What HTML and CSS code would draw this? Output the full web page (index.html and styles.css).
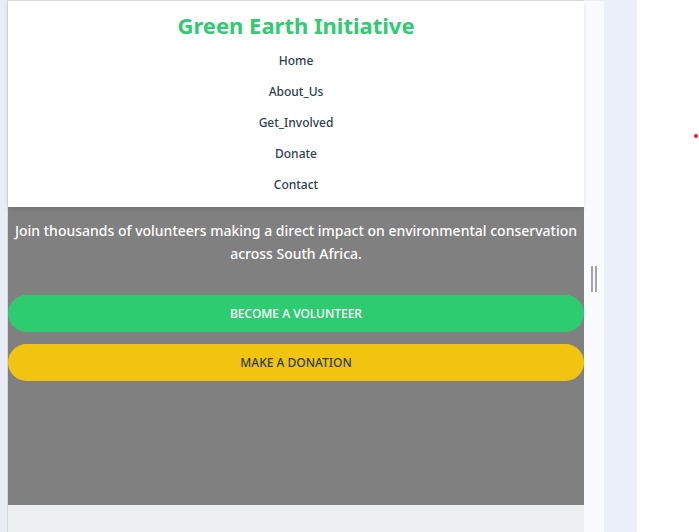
FILE: index.html
```html
<!DOCTYPE html>
<html lang="en">
<head>
<meta charset="utf-8">
<title>Green Earth Initiative</title>
<link rel="stylesheet" href="styles.css">
</head>
<body>
<div class="workspace">
  <div class="device">
    <header class="header">
      <h1 class="logo">Green Earth Initiative</h1>
      <nav>
        <ul class="menu">
          <li><a href="#home">Home</a></li>
          <li><a href="#about">About_Us</a></li>
          <li><a href="#involved">Get_Involved</a></li>
          <li><a href="#donate">Donate</a></li>
          <li><a href="#contact">Contact</a></li>
        </ul>
      </nav>
    </header>
    <main class="hero">
      <p class="lead">Join thousands of volunteers making a direct impact on environmental conservation across South Africa.</p>
      <div class="actions">
        <a class="btn btn-primary" href="#involved">BECOME A VOLUNTEER</a>
        <a class="btn btn-secondary" href="#donate">MAKE A DONATION</a>
      </div>
    </main>
  </div>
  <div class="resizer"><span class="grip"></span></div>
  <div class="gutter"></div>
  <aside class="panel"><span class="marker"></span></aside>
</div>
</body>
</html>
```
FILE: styles.css
```css
* {
  box-sizing: border-box;
}

body {
  margin: 0;
  font-family: "Noto Sans", "Open Sans", sans-serif;
  font-size: 12px;
  color: #2c3e50;
  background: #fff;
}

.workspace {
  display: grid;
  grid-template-columns: minmax(0, 1fr) 20px 33px 62px;
  min-height: 100vh;
  padding-left: 7px;
  background: #e8edf6;
}

.device {
  border-top: 1px solid #dddde4;
  border-left: 1px solid #d9dce4;
  background: #ecf0f1;
}

.header {
  position: relative;
  padding: 8px 0;
  text-align: center;
  background: #fff;
  box-shadow: 0 2px 5px rgba(0, 0, 0, 0.1);
}

.logo {
  margin: 0;
  font-size: 22px;
  line-height: 33px;
  font-weight: 700;
  color: #2ecc71;
}

.menu {
  display: grid;
  gap: 12px;
  margin: 0;
  padding: 9px 0 5px;
  list-style: none;
  line-height: 19px;
}

.menu a {
  font-weight: 500;
  color: #2c3e50;
  text-decoration: none;
}

.hero {
  min-height: 298px;
  padding-top: 12px;
  text-align: center;
  color: #fff;
  background: #808080;
}

.lead {
  margin: 0 0 30px;
  font-size: 14px;
  line-height: 23px;
  font-weight: 500;
}

.actions {
  display: grid;
  gap: 12px;
}

.btn {
  padding: 9px 24px;
  border-radius: 19px;
  line-height: 19px;
  font-weight: 500;
  text-decoration: none;
}

.btn-primary {
  color: #fff;
  background: #2ecc71;
}

.btn-secondary {
  color: #2c3e50;
  background: #f1c40f;
}

.resizer {
  display: flex;
  justify-content: center;
  padding-top: 265px;
  border-top: 1px solid #ebeff8;
  background: #f9fbff;
}

.grip {
  width: 6px;
  height: 26px;
  border: solid #a5a5a5;
  border-width: 0 2px;
}

.gutter {
  background: #ebf0fa;
  border-left: 2px solid #eaf1f8;
}

.panel {
  display: flex;
  justify-content: flex-end;
  padding: 134px 1px 0 0;
  background: #fff;
}

.marker {
  width: 4px;
  height: 4px;
  border-radius: 2px;
  background: #e81c1c;
}
```
